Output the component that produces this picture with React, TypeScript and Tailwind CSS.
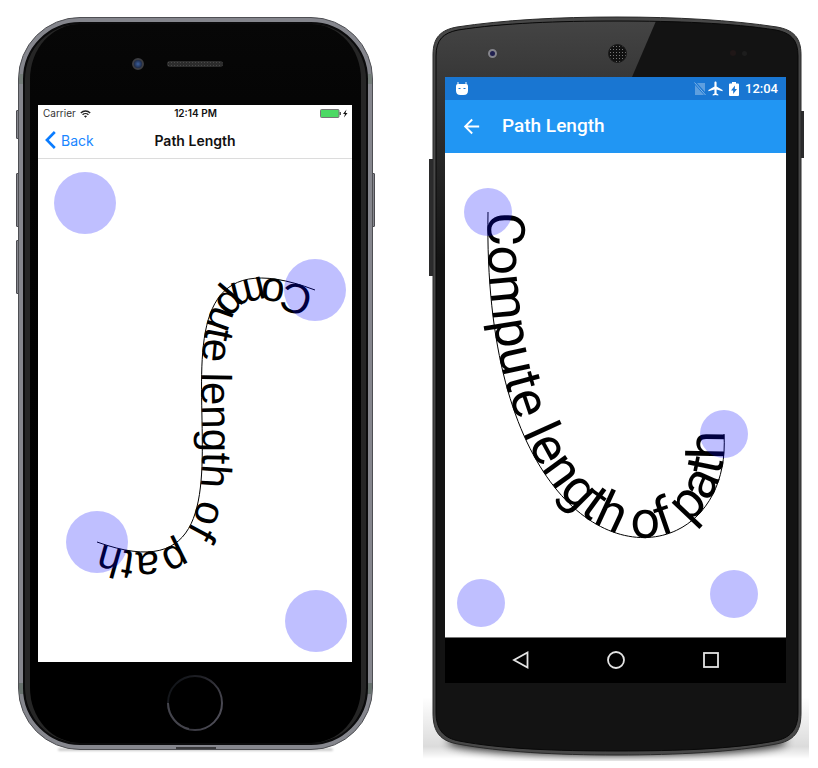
import type { ReactNode } from 'react';
import { MdAirplanemodeActive, MdArrowBack } from 'react-icons/md';

type Point = [number, number];

interface CurveProps {
  id: string;
  width: number;
  height: number;
  points: [Point, Point, Point, Point];
  radius: number;
  textClass: string;
}

/* Bezier curve with text along it and four translucent touch points. */
function BezierCanvas({ id, width, height, points, radius, textClass }: CurveProps) {
  const [a, b, c, d] = points;
  return (
    <svg viewBox={`0 0 ${width} ${height}`} className="block h-auto w-full bg-white">
      <path id={id} d={`M${a} C${b} ${c} ${d}`} fill="none" stroke="#000" strokeWidth="1" />
      <text className={textClass}>
        <textPath href={`#${id}`}>Compute length of path</textPath>
      </text>
      {points.map(([x, y]) => (
        <circle key={`${x}-${y}`} cx={x} cy={y} r={radius} fill="#0000ff" fillOpacity="0.25" />
      ))}
    </svg>
  );
}

function SideKey({ className }: { className: string }) {
  return <span className={`absolute rounded-[1px] ${className}`} />;
}

function IPhone() {
  const key = 'w-[4px] border border-[#4b4b50] bg-[#85868d]';
  return (
    <section aria-label="iPhone" className="relative mt-[17px]">
      <SideKey className={`${key} top-[93px] -left-[2px] h-[29px]`} />
      <SideKey className={`${key} top-[156px] -left-[2px] h-[54px]`} />
      <SideKey className={`${key} top-[223px] -left-[2px] h-[54px]`} />
      <SideKey className={`${key} top-[156px] -right-[2px] h-[54px]`} />
      <span className="absolute inset-x-10 -bottom-[1px] h-[3px] rounded-full bg-black/20 blur-[1px]" />
      <div className="relative overflow-hidden rounded-[62px] border border-[#4e4f53] bg-[#85868d]">
        <span className="absolute top-[56px] left-0 h-[10px] w-full bg-[#737c78]" />
        <span className="absolute bottom-[55px] left-0 h-[11px] w-full bg-[#67716d]" />
        <span className="absolute bottom-0 left-1/2 h-[2px] w-10 -translate-x-1/2 bg-[#3a3a3d]" />
        <div className="relative m-[4px] rounded-[57px] border-2 border-[#0b0b0c] bg-linear-to-b from-[#070707] to-black">
          <span className="absolute inset-0 rounded-[55px] border-x-[5px] border-y-0 border-x-[#262626] border-y-black" />
          <div className="relative pr-[14px] pl-[13px]">
            <div className="flex h-[81px] items-center">
              <div className="grid w-full grid-cols-[1fr_56px_1fr] items-center pb-[2px]">
                <span className="mr-[23px] size-[12px] justify-self-end rounded-full border-2 border-[#3c3d42] bg-radial from-[#3c5f9c] to-[#10172a]" />
                <span className="h-[6px] rounded-full bg-[#2c2c2c] bg-[radial-gradient(#4a4a4a_1px,transparent_1px)] bg-size-[3px_3px]" />
              </div>
            </div>
            <div className="bg-white font-['Inter','Liberation_Sans',sans-serif] text-[#111]">
              <div className="grid h-[17px] grid-cols-[1fr_auto_1fr] items-center pr-[4px] pl-[5px] text-[10px]">
                <span className="flex items-center gap-1 text-[#333]">
                  Carrier
                  <svg viewBox="0 0 12 9" className="h-[8px] w-[11px]" fill="none" stroke="#222" strokeWidth="1.5">
                    <path d="M.7 3.3a7.6 7.6 0 0 1 10.6 0M2.7 5.3a4.8 4.8 0 0 1 6.6 0" />
                    <path d="M4.3 6.9a2.4 2.4 0 0 1 3.4 0L6 8.8z" fill="#222" stroke="none" />
                  </svg>
                </span>
                <span className="text-center font-semibold whitespace-nowrap">12:14 PM</span>
                <svg viewBox="0 0 28 9" className="h-[9px] w-[28px] justify-self-end">
                  <rect x=".5" y=".5" width="18.5" height="8" rx="1" fill="#4cd964" stroke="#777" />
                  <rect x="19.5" y="3" width="1.5" height="3" fill="#555" />
                  <path d="M26.5.5 23 5h2l-1 3.5L27.5 4h-2z" fill="#111" />
                </svg>
              </div>
              <div className="grid h-[37px] grid-cols-[1fr_auto_1fr] items-center border-b border-[#dcdcdc] text-[14px]">
                <button type="button" className="flex items-center gap-[5px] pl-[7px] text-[#1a86ff]">
                  <svg viewBox="0 0 11 18" className="h-[18px] w-[11px]" fill="none" stroke="#0a7cff" strokeWidth="2.6">
                    <path d="M9.8 1 1.9 9l7.9 8" />
                  </svg>
                  Back
                </button>
                <h1 className="font-semibold">Path Length</h1>
              </div>
              <BezierCanvas
                id="iphone-curve"
                width={314}
                height={503}
                points={[[277, 131], [47, 44], [278, 462], [59, 383]]}
                radius={31}
                textClass="fill-black font-['Liberation_Sans',sans-serif] text-[42px]"
              />
            </div>
            <div className="flex h-[81px] items-center justify-center">
              <svg viewBox="0 0 58 58" className="size-[58px]" fill="none">
                <defs>
                  <linearGradient id="home-ring" x1="0" y1="0" x2="1" y2="0.6">
                    <stop offset="0" stopColor="#0c1014" />
                    <stop offset="0.5" stopColor="#222228" />
                    <stop offset="1" stopColor="#4c4b55" />
                  </linearGradient>
                </defs>
                <circle cx="29" cy="29" r="27" stroke="url(#home-ring)" strokeWidth="2" />
                <path d="M2 29a27 27 0 0 0 21 26" stroke="#44444c" strokeWidth="2" />
              </svg>
            </div>
          </div>
        </div>
      </div>
    </section>
  );
}

/* Curved body of the Android handset, drawn behind its screen. */
function AndroidBody() {
  const body =
    'M0 38C0 20 8 13 24 10C70 3 125 0 184 0C243 0 298 3 344 10C360 13 368 20 368 38V696C368 716 360 724 343 727C300 735 245 738 184 738C123 738 68 735 25 727C8 724 0 716 0 696Z';
  const glass =
    'M3 39C3 23 10 16 25 13C70 6 125 4 184 4C243 4 298 6 343 13C358 16 365 23 365 39V695C365 713 357 721 342 724C300 732 245 734 184 734C123 734 68 732 26 724C11 721 3 713 3 695Z';
  return (
    <svg
      viewBox="0 0 368 738"
      preserveAspectRatio="none"
      className="absolute inset-0 size-full overflow-visible"
      aria-hidden="true"
    >
      <defs>
        <linearGradient id="sheen" x1="0" y1="0" x2="0" y2="1">
          <stop offset="0" stopColor="#444" />
          <stop offset="0.15" stopColor="#373737" />
          <stop offset="0.6" stopColor="#131313" />
        </linearGradient>
        <linearGradient id="side-shade" x1="0" y1="0" x2="0" y2="1">
          <stop offset="0" stopColor="#000" stopOpacity="0" />
          <stop offset="0.8" stopColor="#000" stopOpacity="0.14" />
          <stop offset="1" stopColor="#000" stopOpacity="0" />
        </linearGradient>
        <filter id="soft" x="-20%" y="-60%" width="140%" height="220%">
          <feGaussianBlur stdDeviation="4" />
        </filter>
        <clipPath id="shadow-area">
          <rect x="-10" y="670" width="386" height="74" />
        </clipPath>
      </defs>
      <g clipPath="url(#shadow-area)">
        <rect x="-10" y="680" width="386" height="62" fill="url(#side-shade)" />
        <ellipse cx="184" cy="725" rx="170" ry="14" fill="#000" opacity="0.8" filter="url(#soft)" />
      </g>
      <rect x="-4" y="142" width="5" height="117" fill="#2b2b2c" />
      <rect x="367" y="94" width="4" height="47" fill="#2b2b2c" />
      <path d={body} fill="#484848" />
      <path d={body} fill="none" stroke="#2a2a2a" strokeWidth="1" />
      <path d={glass} fill="#131313" />
      <path d="M223 4C200 4 170 4 150 4C100 5 60 8 25 13C10 16 3 23 3 39V400H50L199 60Z" fill="url(#sheen)" />
      <path d={glass} fill="none" stroke="#090909" strokeWidth="1" />
    </svg>
  );
}

function NavButton({ label, children }: { label: string; children: ReactNode }) {
  return (
    <button type="button" aria-label={label} className="flex justify-center">
      <svg viewBox="0 0 20 20" className="size-5" fill="none" stroke="#e4e4e4" strokeWidth="1.8">
        {children}
      </svg>
    </button>
  );
}

function AndroidPhone() {
  return (
    <section aria-label="Android phone" className="relative mt-[17px]">
      <AndroidBody />
      <div className="relative pr-[15px] pl-[12px]">
        <div className="grid h-[60px] grid-cols-[1fr_auto_1fr] items-center pt-[12px] pr-[39px] pl-[43px]">
          <span className="size-[9px] rounded-full border-2 border-[#85858c] bg-[#20204f]" />
          <span className="size-[19px] rounded-full border border-[#1a1a1a] bg-[#111] bg-[radial-gradient(#777_1px,transparent_1px)] bg-size-[3px_3px]" />
          <span className="flex items-center gap-[6px] justify-self-end">
            <span className="size-[6px] rounded-full bg-[#1f1717]" />
            <span className="size-[5px] rounded-full bg-[#1d1d1d]" />
          </span>
        </div>
        <div className="bg-white font-['Roboto','Liberation_Sans',sans-serif] text-white">
          <div className="flex h-[23px] items-center bg-[#1976d2] pr-[8px] pl-[10px]">
            <svg viewBox="0 0 14 14" className="h-[14px] w-[14px]">
              <path d="M3 0v3M11 0v3" stroke="#fff" strokeOpacity="0.7" strokeWidth="1.4" />
              <path d="M1 4Q1 2 3 2H11Q13 2 13 4V8.5Q13 13 8.5 13H5.5Q1 13 1 8.5Z" fill="#fff" />
              <path d="M3.5 6.5h2M8.5 6.5h2" stroke="#1976d2" strokeWidth="1.2" />
            </svg>
            <svg viewBox="0 0 12 14" className="ml-auto h-[14px] w-[12px]">
              <path d="M3 1h8v9zM1 3v10h9z" fill="#fff" opacity="0.3" />
              <path d="M.5.5 11.5 13" stroke="#7db3e8" strokeWidth="1" />
            </svg>
            <MdAirplanemodeActive className="ml-px size-[17px]" />
            <svg viewBox="0 0 10 14" className="ml-[5px] h-[14px] w-[10px]">
              <path d="M3 0h4v1.5h2a1 1 0 0 1 1 1V13a1 1 0 0 1-1 1H1a1 1 0 0 1-1-1V2.5a1 1 0 0 1 1-1h2z" fill="#fff" />
              <path d="M6 3.5 2 8.5h2.2V12L8 7H5.8z" fill="#1976d2" />
            </svg>
            <span className="ml-[6px] text-[13px] font-medium">12:04</span>
          </div>
          <div className="flex h-[53px] items-center bg-[#2196f3] pl-[15px]">
            <button type="button" aria-label="Navigate up">
              <MdArrowBack className="size-[23px]" />
            </button>
            <h1 className="ml-[19px] text-[19px] font-medium">Path Length</h1>
          </div>
          <BezierCanvas
            id="android-curve"
            width={341}
            height={484}
            points={[[43, 59], [36, 450], [289, 441], [279, 281]]}
            radius={24}
            textClass="fill-black font-['Roboto',sans-serif] text-[52px]"
          />
          <nav aria-label="System navigation" className="grid h-[46px] grid-cols-3 items-center border-t border-[#777] bg-black px-[28px] pb-[2px]">
            <NavButton label="Back">
              <path d="M16.5 2.5v15L3 10z" />
            </NavButton>
            <NavButton label="Home">
              <circle cx="10" cy="10" r="8" />
            </NavButton>
            <NavButton label="Recent apps">
              <rect x="3" y="3" width="14" height="14" />
            </NavButton>
          </nav>
        </div>
        <div className="h-[72px]" />
      </div>
    </section>
  );
}

export default function App() {
  return (
    <main className="grid grid-cols-[355fr_368fr] items-start gap-[60px] overflow-hidden bg-white pr-[17px] pb-[13px] pl-[18px]">
      <IPhone />
      <AndroidPhone />
    </main>
  );
}
